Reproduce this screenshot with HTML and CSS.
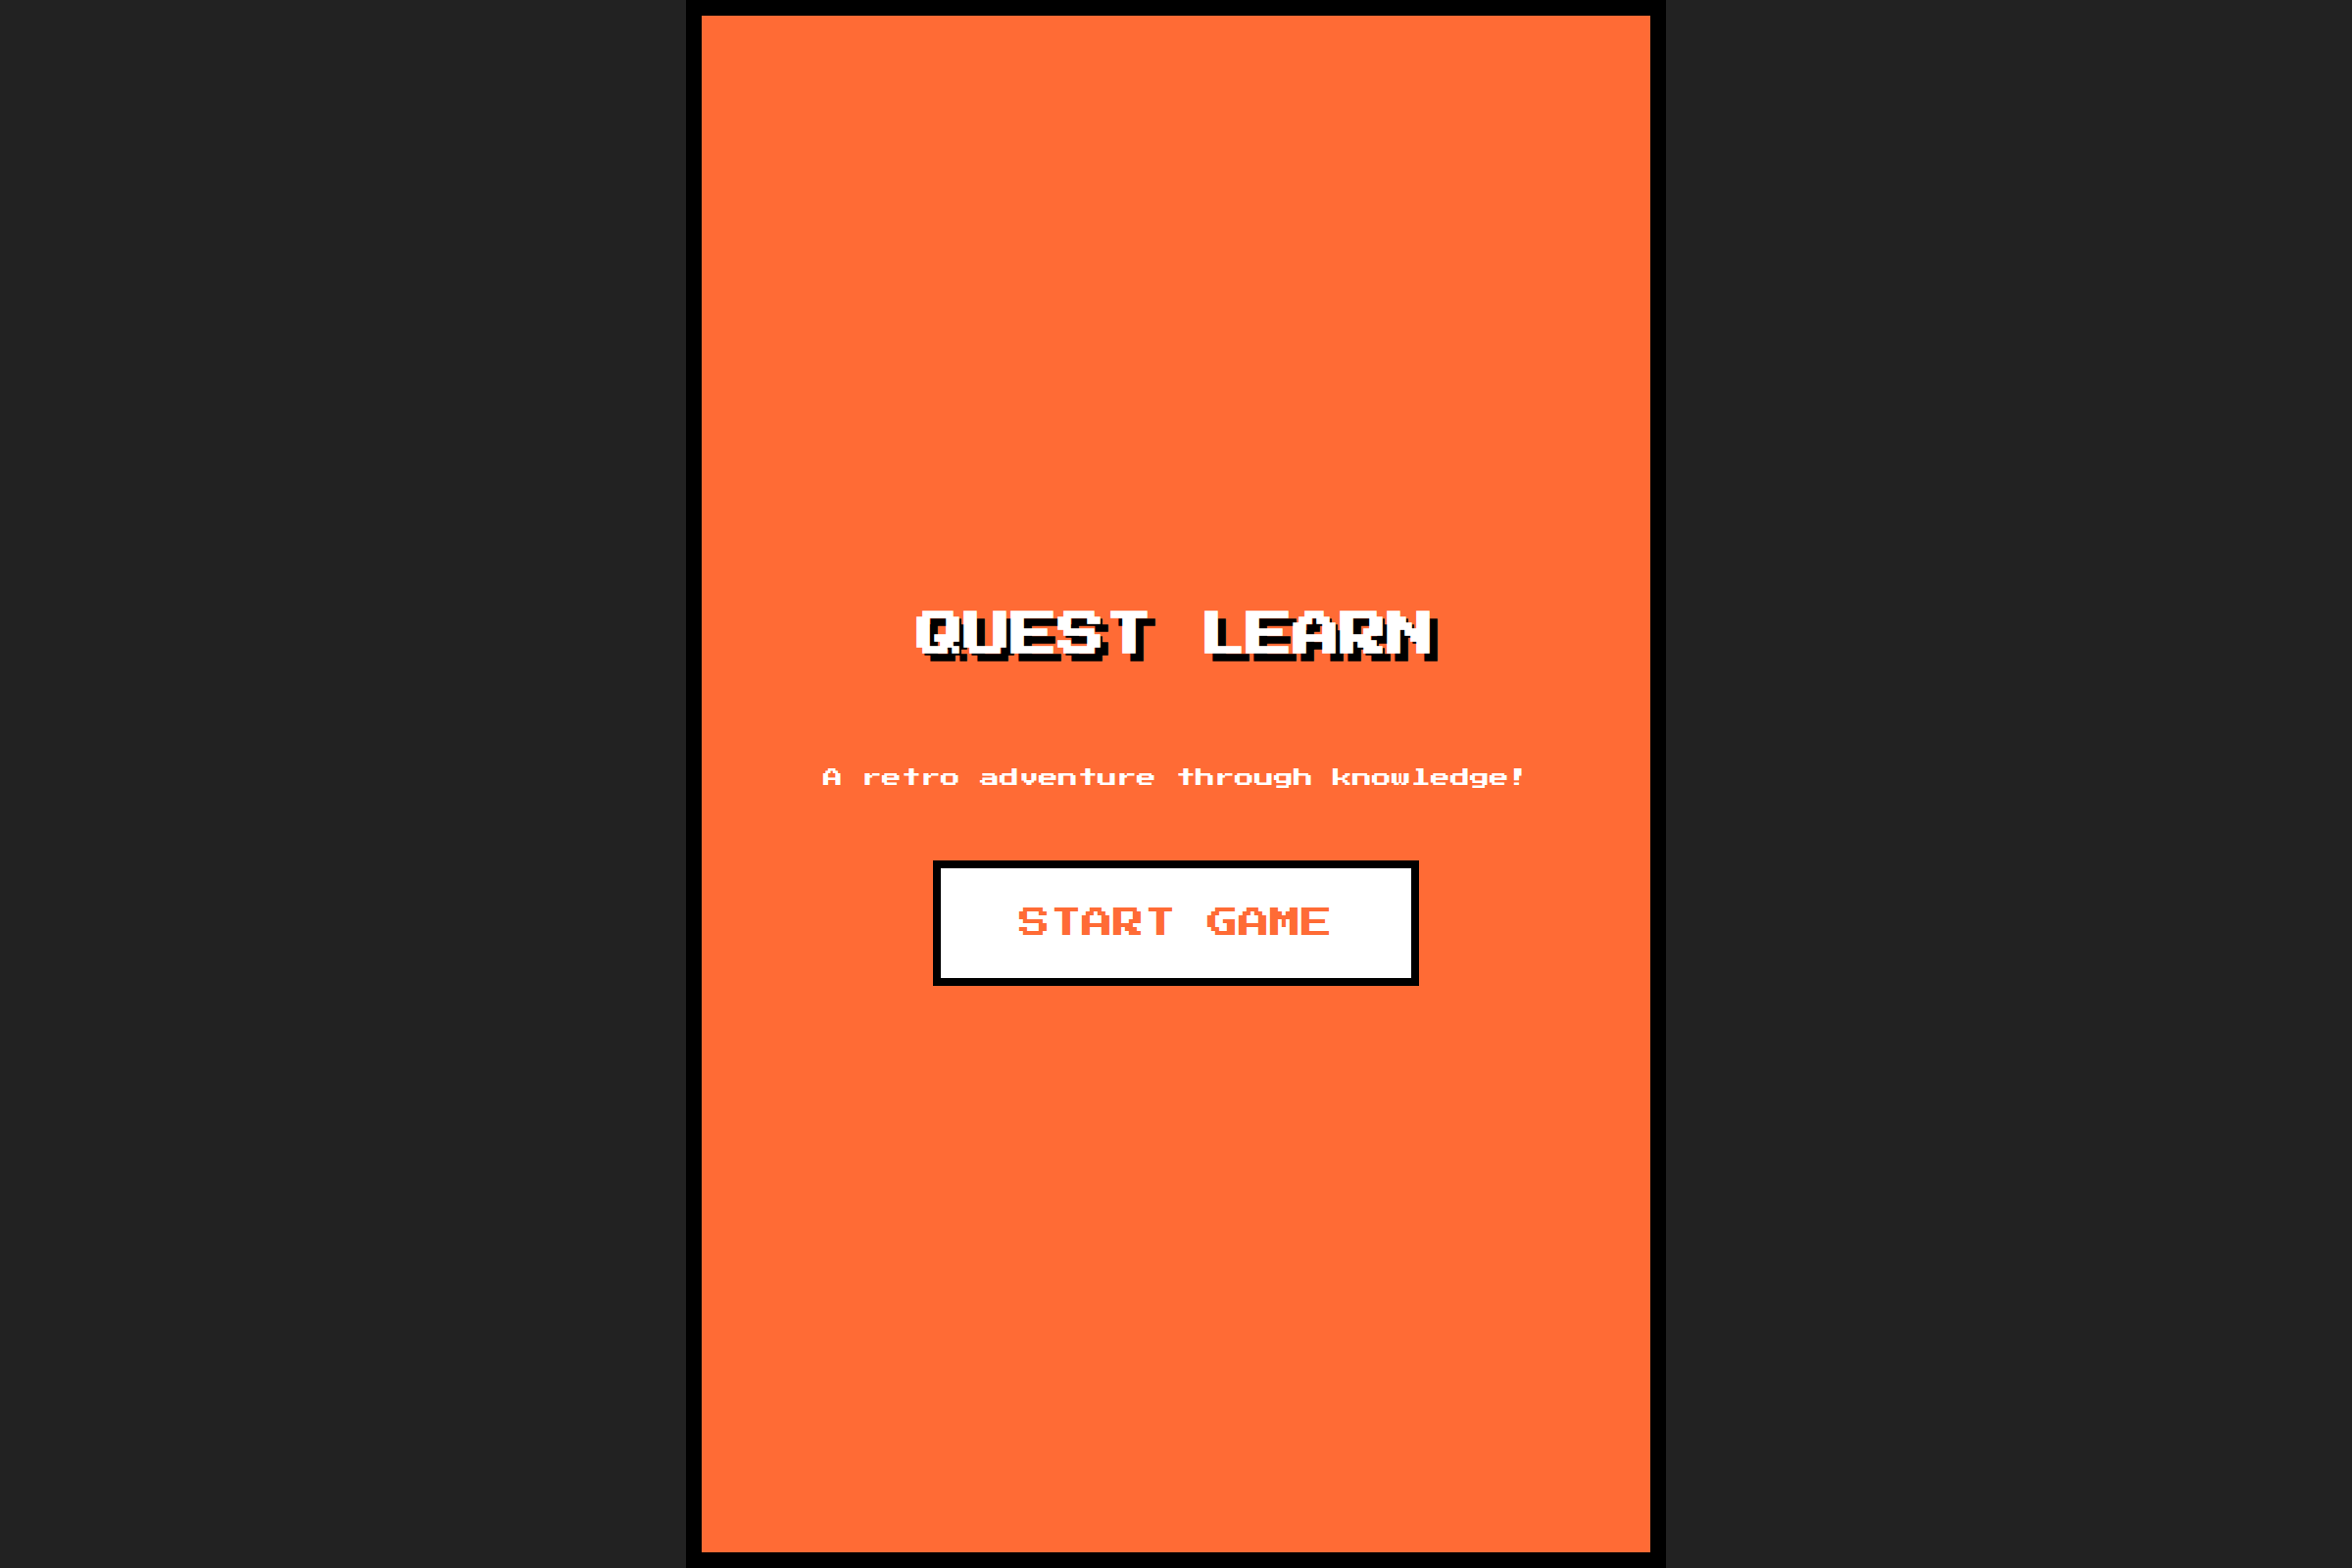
FILE: index.html
```
<!DOCTYPE html>
<html lang="en">
<head>
    <meta charset="UTF-8">
    <meta name="viewport" content="width=device-width, initial-scale=1.0">
    <title>Quest Learn</title>
    <link rel="stylesheet" href="styles.css">
</head>
<body>
    <main class="game-container">
        <h1 class="game-title">QUEST LEARN</h1>
        <p class="subtitle">A retro adventure through knowledge!</p>
        <button type="button" class="start-btn">START GAME</button>
    </main>
</body>
</html>
```
FILE: styles.css
```
* {
    margin: 0;
    padding: 0;
    box-sizing: border-box;
}

body {
    background: #222;
    font-family: 'Press Start 2P', 'Liberation Mono', monospace;
    min-height: 100vh;
    display: flex;
    justify-content: center;
}

.game-container {
    width: 100%;
    max-width: 1000px;
    background: #ff6b35;
    border: 16px solid #000;
    color: #fff;
    display: flex;
    flex-direction: column;
    align-items: center;
    justify-content: center;
    text-align: center;
}

.game-title {
    font-size: 48px;
    line-height: 108px;
    margin-bottom: 72px;
    text-shadow: 8px 8px 0 #000;
}

.subtitle {
    font-size: 20px;
    line-height: 40px;
    margin-bottom: 64px;
}

.start-btn {
    font-family: inherit;
    font-size: 32px;
    line-height: 32px;
    color: #ff6b35;
    background: #fff;
    border: 8px solid #000;
    padding: 40px 80px;
    cursor: pointer;
}

.start-btn:hover {
    background: #000;
    color: #fff;
}
```
